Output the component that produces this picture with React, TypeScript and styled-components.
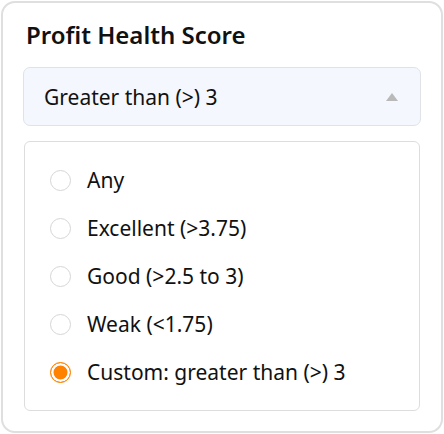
import React, { useState } from "react";
import styled, { createGlobalStyle } from "styled-components";

const GlobalStyle = createGlobalStyle`
  html, body {
    margin: 0;
    padding: 0;
    background: #ffffff;
  }
  body {
    font-family: "Noto Sans", "Open Sans", sans-serif;
    color: #111111;
  }
`;

const Page = styled.div`
  padding: 1px;
`;

const Card = styled.div`
  box-sizing: border-box;
  width: 442px;
  height: 432px;
  border: 2px solid #dfdfdf;
  border-radius: 14px;
  padding: 14px 20px 0 20px;
  display: flex;
  flex-direction: column;
`;

const Title = styled.h2`
  margin: 0 0 0 3px;
  font-size: 24px;
  font-weight: 600;
  line-height: 36px;
  color: #111111;
`;

const Select = styled.div`
  box-sizing: border-box;
  margin-top: 14px;
  height: 59px;
  display: flex;
  align-items: center;
  justify-content: space-between;
  padding: 0 20px 0 20px;
  background: #f4f7fd;
  border: 1px solid #dfe3e8;
  border-radius: 7px;
  font-size: 21px;
  color: #111111;
`;

const Caret = styled.span`
  width: 0;
  height: 0;
  border-left: 6px solid transparent;
  border-right: 6px solid transparent;
  border-bottom: 8px solid #b9b9b9;
  margin-right: 2px;
`;

const OptionList = styled.div`
  box-sizing: border-box;
  margin: 15px 1px 0 1px;
  height: 270px;
  border: 1.5px solid #dddddd;
  border-radius: 6px;
  padding: 14px 0 0 25px;
  display: flex;
  flex-direction: column;
`;

const OptionRow = styled.label`
  height: 48px;
  display: flex;
  align-items: center;
  gap: 16px;
  font-size: 21px;
  color: #111111;
  cursor: pointer;
`;

const Radio = styled.span<{ $checked: boolean }>`
  box-sizing: border-box;
  width: 21px;
  height: 21px;
  border-radius: 50%;
  border: 1.5px solid ${(p) => (p.$checked ? "#ff8200" : "#d6d6d6")};
  background: ${(p) => (p.$checked ? "#ff8200" : "#ffffff")};
  box-shadow: ${(p) => (p.$checked ? "inset 0 0 0 2.5px #ffffff" : "none")};
  flex-shrink: 0;
`;

const options = [
  "Any",
  "Excellent (>3.75)",
  "Good (>2.5 to 3)",
  "Weak (<1.75)",
  "Custom: greater than (>) 3",
];

export default function App() {
  const [selected, setSelected] = useState(4);
  return (
    <>
      <GlobalStyle />
      <Page>
        <Card>
          <Title>Profit Health Score</Title>
          <Select>
            <span>Greater than (&gt;) 3</span>
            <Caret />
          </Select>
          <OptionList>
            {options.map((text, i) => (
              <OptionRow key={text} onClick={() => setSelected(i)}>
                <Radio $checked={selected === i} />
                {text}
              </OptionRow>
            ))}
          </OptionList>
        </Card>
      </Page>
    </>
  );
}
